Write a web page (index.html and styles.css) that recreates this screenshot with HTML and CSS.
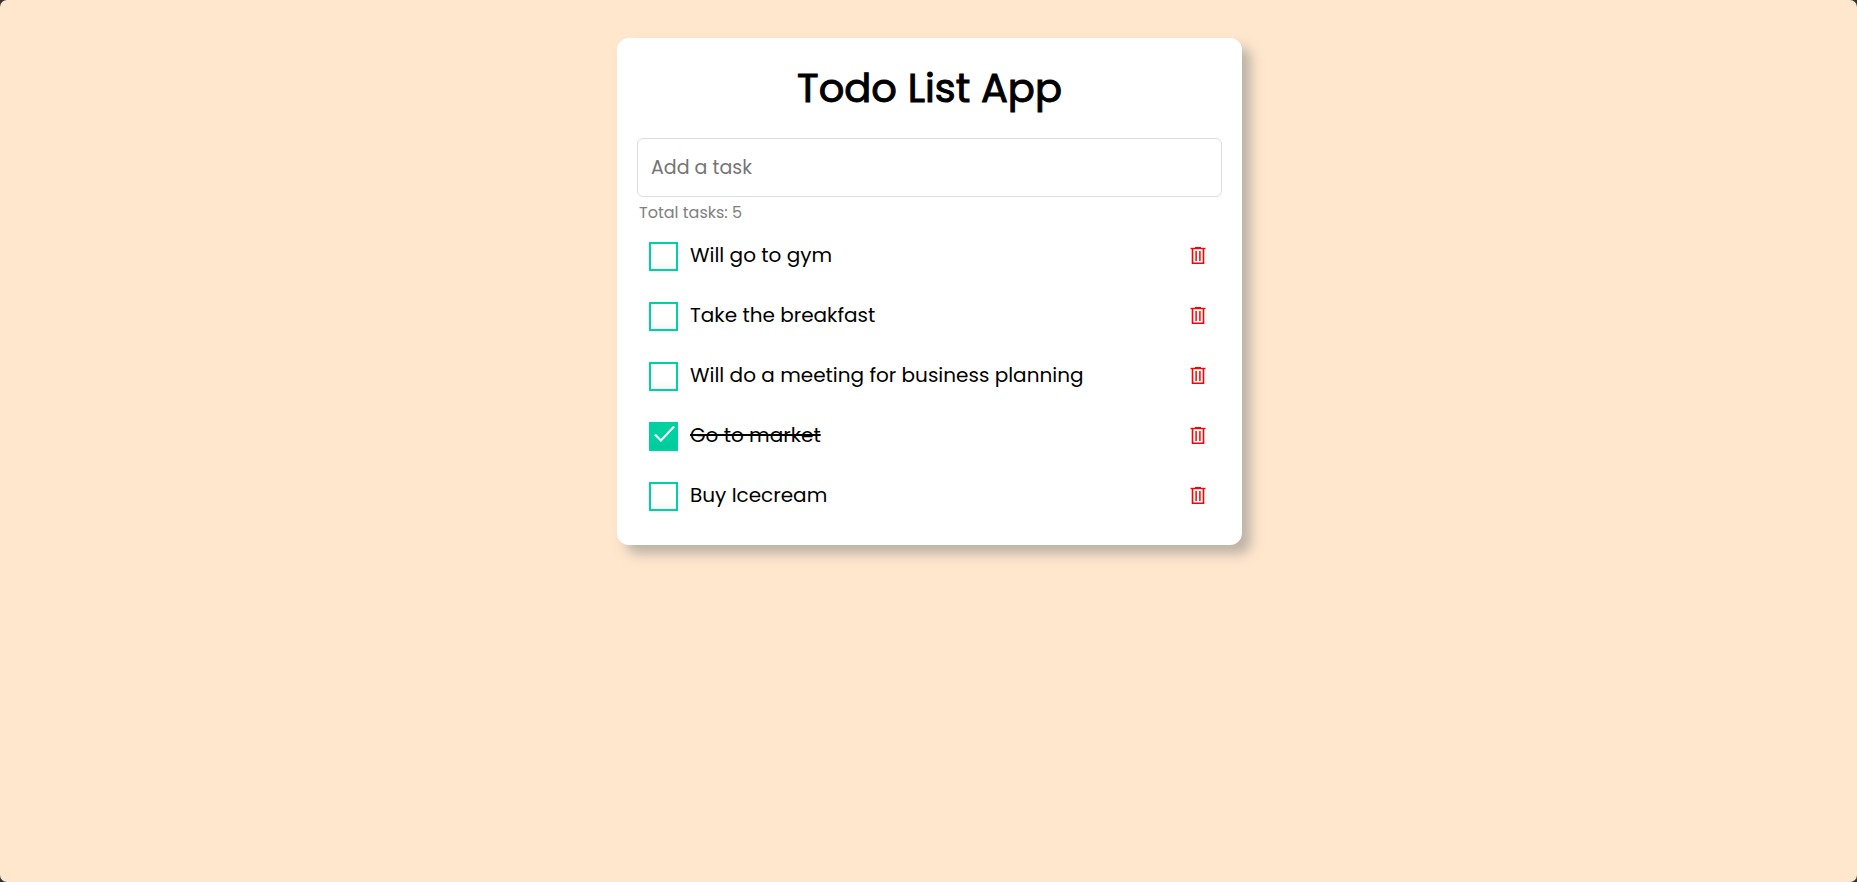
FILE: index.html
```html
<!DOCTYPE html>
<html lang="en">
<head>
	<meta charset="UTF-8">
	<meta name="viewport" content="width=device-width, initial-scale=1.0">
	<title>Todo List App</title>
	<link rel="stylesheet" href="styles.css">
</head>
<body>
	<svg class="sprite" aria-hidden="true">
		<symbol id="trash" viewBox="0 0 16 20">
			<path d="M5 2.500h6" stroke-width="1"/>
			<path d="M.5 3.500h15" stroke-width="1.400"/>
			<path d="M2.500 4v14.300h11V4" stroke-width="1.600"/>
			<path d="M6.100 6v10M9.900 6v10" stroke-width="1.500"/>
		</symbol>
	</svg>
	<main class="container">
		<h1 class="title">Todo List App</h1>
		<input type="text" class="add-task" placeholder="Add a task" aria-label="Add a task">
		<p class="total">Total tasks: 5</p>
		<ul class="list">
			<li class="task">
				<input type="checkbox" class="check" id="task1">
				<label for="task1" class="name">Will go to gym</label>
				<button type="button" class="delete" aria-label="Delete"><svg class="icon"><use href="#trash"/></svg></button>
			</li>
			<li class="task">
				<input type="checkbox" class="check" id="task2">
				<label for="task2" class="name">Take the breakfast</label>
				<button type="button" class="delete" aria-label="Delete"><svg class="icon"><use href="#trash"/></svg></button>
			</li>
			<li class="task">
				<input type="checkbox" class="check" id="task3">
				<label for="task3" class="name">Will do a meeting for business planning</label>
				<button type="button" class="delete" aria-label="Delete"><svg class="icon"><use href="#trash"/></svg></button>
			</li>
			<li class="task">
				<input type="checkbox" class="check" id="task4" checked>
				<label for="task4" class="name">Go to market</label>
				<button type="button" class="delete" aria-label="Delete"><svg class="icon"><use href="#trash"/></svg></button>
			</li>
			<li class="task">
				<input type="checkbox" class="check" id="task5">
				<label for="task5" class="name">Buy Icecream</label>
				<button type="button" class="delete" aria-label="Delete"><svg class="icon"><use href="#trash"/></svg></button>
			</li>
		</ul>
	</main>
</body>
</html>
```
FILE: styles.css
```css
*{
	padding: 0;
	margin: 0;
	box-sizing: border-box;
}
html{
	background: #333;
}
body{
	min-height: 100vh;
	padding: 38px 18px 38px 20px;
	background: #ffe7ce;
	border-radius: 7px;
	font-family: Poppins, Inter, sans-serif;
	color: #000;
}
.sprite{
	display: none;
}
.container{
	max-width: 625px;
	margin: 0 auto;
	padding: 20px;
	background: #fff;
	border-radius: 12px;
	box-shadow: 9px 9px 12px rgba(128,128,128,0.5);
}
.title{
	margin-bottom: 20px;
	font-size: 40px;
	line-height: 60px;
	font-weight: 400;
	-webkit-text-stroke: 1px #000;
	text-align: center;
}
.add-task{
	display: block;
	width: 100%;
	height: 59px;
	padding: 0 13px;
	border: 1px solid #ddd;
	border-radius: 6px;
	outline: none;
	font-family: inherit;
	font-size: 19px;
}
.add-task::placeholder{
	color: #757575;
}
.total{
	padding: 4px 2px 0;
	font-size: 16px;
	line-height: 24px;
	color: gray;
}
.task{
	display: flex;
	align-items: center;
	height: 60px;
	padding: 0 16px 0 12px;
	list-style: none;
}
.check{
	appearance: none;
	width: 29px;
	height: 29px;
	margin-top: 2px;
	border: 2px solid #00d1a0;
	box-shadow: 0 1px 2px rgba(0,0,0,0.05), inset 0 -15px 10px -12px rgba(0,0,0,0.05);
	cursor: pointer;
}
.check:checked{
	display: grid;
	place-items: center;
	background: #00d1a0;
}
/* check mark */
.check:checked::after{
	content: "";
	width: 23px;
	height: 20px;
	background: #fff;
	clip-path: polygon(2px 9px, 4px 8px, 9px 13px, 21px 0, 23px 1px, 9px 16px);
}
.name{
	flex: 1;
	margin-left: 12px;
	font-size: 20px;
	line-height: 30px;
}
.check:checked + .name{
	text-decoration: line-through;
}
.delete{
	display: flex;
	border: none;
	background: none;
	cursor: pointer;
}
.icon{
	width: 16px;
	height: 20px;
	fill: none;
	stroke: #f00;
}
```
